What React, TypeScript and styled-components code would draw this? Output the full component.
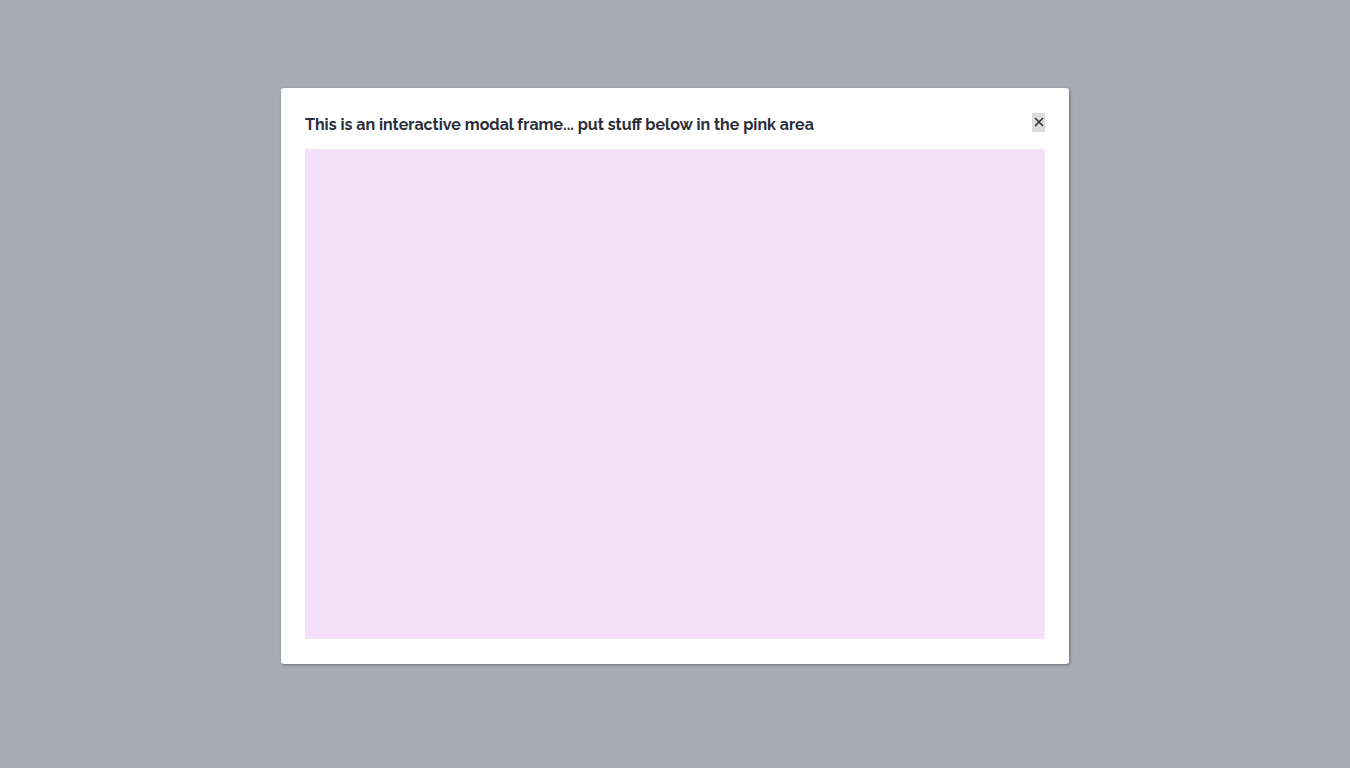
import React from "react";
import styled, { createGlobalStyle } from "styled-components";

const Global = createGlobalStyle`
  html, body { margin: 0; padding: 0; }
  body {
    background: #a8abb4;
    font-family: "Raleway", Lato, "Open Sans", sans-serif;
  }
`;

const Page = styled.div`
  min-height: 100vh;
  display: flex;
  justify-content: center;
  align-items: flex-start;
  padding-top: 88px;
  box-sizing: border-box;
`;

const Modal = styled.div`
  width: 788px;
  box-sizing: border-box;
  background: #ffffff;
  border-radius: 3px;
  box-shadow: 1px 1px 3px rgba(0, 0, 0, 0.35);
  padding: 24px 24px 25px;
  display: flex;
  flex-direction: column;
`;

const Header = styled.div`
  display: flex;
  align-items: center;
  justify-content: space-between;
  height: 20px;
  margin-bottom: 17px;
`;

const Title = styled.h2`
  margin: 0;
  padding-top: 6px;
  font-size: 16px;
  font-weight: 700;
  color: #2b2e3b;
  line-height: 20px;
`;

const Close = styled.button`
  width: 13px;
  height: 19px;
  padding: 0;
  border: none;
  background: #dcdcdc;
  color: #2b2e3b;
  display: flex;
  align-items: center;
  justify-content: center;
  cursor: pointer;
`;

const Content = styled.div`
  height: 490px;
  background: #f4e0f9;
`;

export default function App() {
  return (
    <>
      <Global />
      <Page>
        <Modal>
          <Header>
            <Title>This is an interactive modal frame... put stuff below in the pink area</Title>
            <Close aria-label="close">
              <svg width="10" height="10" viewBox="0 0 10 10">
                <path d="M1 1 L9 9 M9 1 L1 9" stroke="#2b2e3b" strokeWidth="1.5" />
              </svg>
            </Close>
          </Header>
          <Content />
        </Modal>
      </Page>
    </>
  );
}
